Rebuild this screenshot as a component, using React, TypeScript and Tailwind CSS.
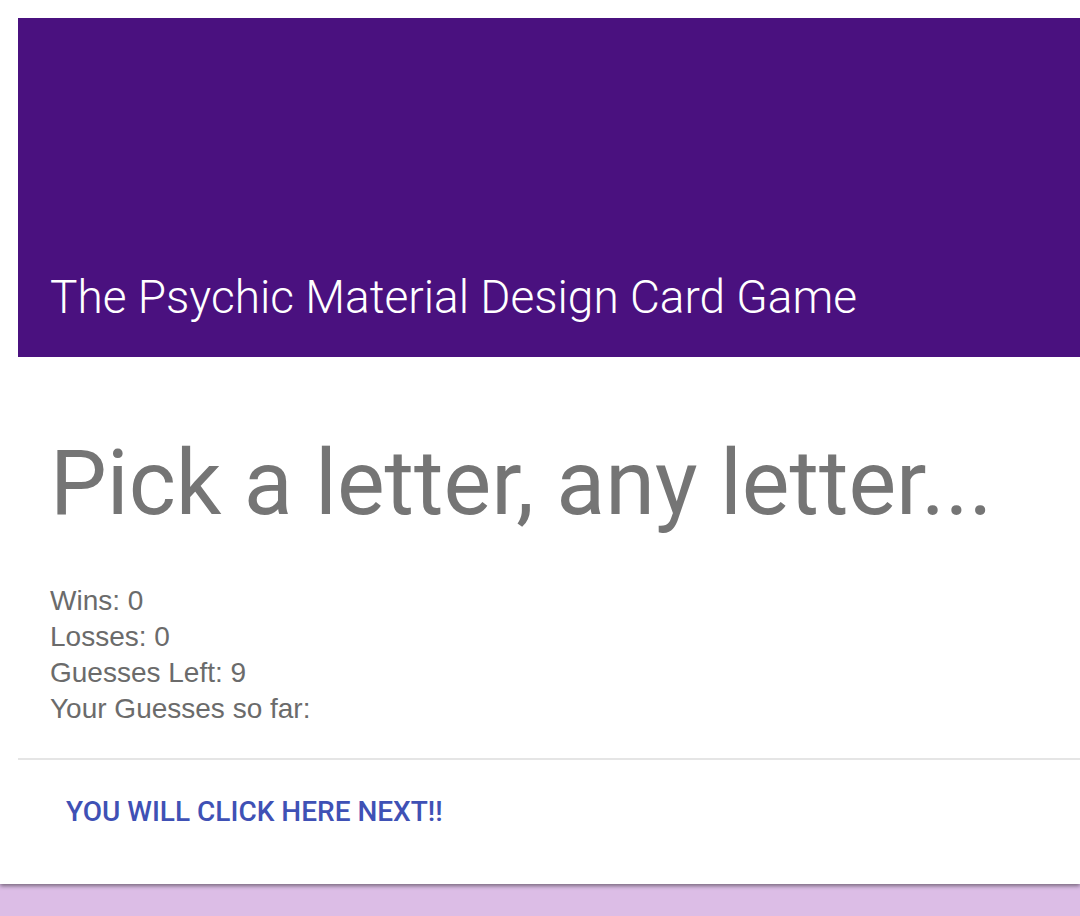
export default function App() {
  return (
    <div className="min-h-[916px] bg-[#dcbde6]">
      <div className="bg-white pt-[18px] pl-[18px] shadow-[0_2px_4px_rgba(0,0,0,0.45)]">
        <div className="flex h-[339px] items-end bg-[#4a117f] px-[32px] pb-[28px]">
          <h1 className="text-[46px] leading-[64px] font-light text-white [font-family:Roboto,sans-serif]">
            The Psychic Material Design Card Game
          </h1>
        </div>

        <div className="px-[32px] pt-[77px] pb-[31px]">
          <h2 className="text-[90px] leading-[100px] font-normal text-[#757575] [font-family:Roboto,sans-serif]">
            Pick a letter, any letter...
          </h2>
          <div className="mt-[49px] text-[28px] leading-[36px] text-[#6b6b6b] [font-family:'Liberation_Sans',Arial,sans-serif]">
            <p>Wins: 0</p>
            <p>Losses: 0</p>
            <p>Guesses Left: 9</p>
            <p>Your Guesses so far:</p>
          </div>
        </div>

        <div className="border-t-2 border-[#e5e5e5] px-[48px] pt-[36px] pb-[56px]">
          <button className="text-[28px] leading-[32px] font-medium uppercase text-[#3f51b5] [font-family:Roboto,sans-serif]">
            You will click here next!!
          </button>
        </div>
      </div>
    </div>
  );
}
